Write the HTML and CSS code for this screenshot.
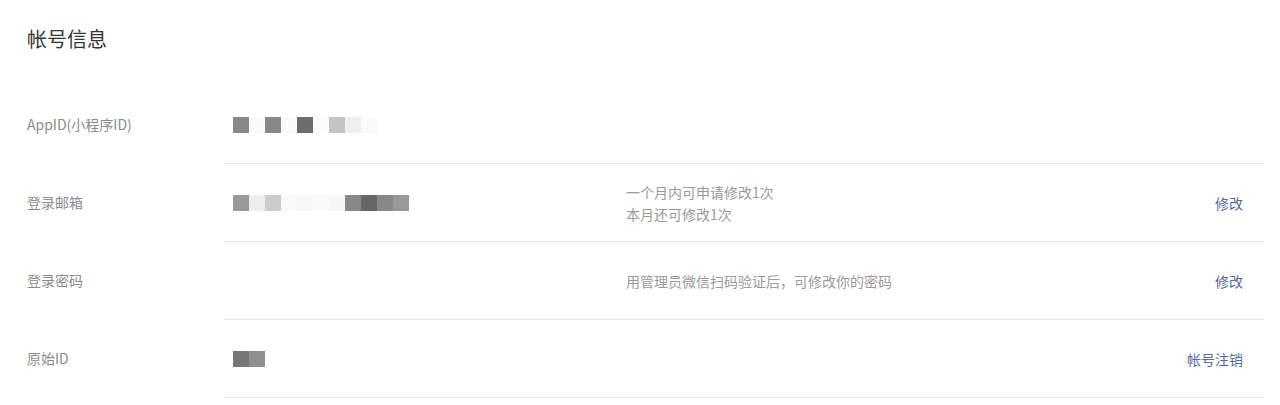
FILE: index.html
```html
<!DOCTYPE html>
<html lang="zh-CN">
<head>
  <meta charset="UTF-8">
  <title>帐号信息</title>
  <link rel="stylesheet" href="styles.css">
</head>
<body>

<!-- Account info panel -->
<div class="panel">
  <h2 class="panel-title">帐号信息</h2>

  <div class="info-row">
    <div class="info-label">AppID(小程序ID)</div>
    <div class="info-body">
      <div class="info-value">
        <span class="mosaic">
          <i class="s88"></i><i class="sfa"></i><i class="s88"></i><i class="sfb"></i><i class="s6d"></i><i class="sfc"></i><i class="sc4"></i><i class="sef"></i><i class="sfa"></i>
        </span>
      </div>
      <div class="info-desc"></div>
      <div class="info-action"></div>
    </div>
  </div>

  <div class="info-row">
    <div class="info-label">登录邮箱</div>
    <div class="info-body">
      <div class="info-value">
        <span class="mosaic">
          <i class="s99"></i><i class="see"></i><i class="scc"></i><i class="sfa"></i><i class="sf8"></i><i class="sfa"></i><i class="sf7"></i><i class="s88"></i><i class="s66"></i><i class="s88"></i><i class="s99"></i>
        </span>
      </div>
      <div class="info-desc">一个月内可申请修改1次<br>本月还可修改1次</div>
      <div class="info-action"><a href="#">修改</a></div>
    </div>
  </div>

  <div class="info-row">
    <div class="info-label">登录密码</div>
    <div class="info-body">
      <div class="info-value"></div>
      <div class="info-desc">用管理员微信扫码验证后，可修改你的密码</div>
      <div class="info-action"><a href="#">修改</a></div>
    </div>
  </div>

  <div class="info-row">
    <div class="info-label">原始ID</div>
    <div class="info-body">
      <div class="info-value">
        <span class="mosaic">
          <i class="s77"></i><i class="s8f"></i>
        </span>
      </div>
      <div class="info-desc"></div>
      <div class="info-action"><a href="#">帐号注销</a></div>
    </div>
  </div>
</div>

</body>
</html>
```

FILE: styles.css
```css
/* Colours */
:root {
  --title: #353535;
  --label: #8c8c8c;
  --muted: #9a9a9a;
  --link: #576b95;
  --line: #e7e7e7;
}
html, body {
  margin: 0;
  padding: 0;
  background: #fff;
  font-family: "Noto Sans CJK SC", "Liberation Sans", sans-serif;
  font-size: 14px;
  color: var(--title);
}

/* Panel */
.panel {
  padding: 0 16px 0 27px;
}
.panel-title {
  margin: 0;
  padding-top: 25px;
  height: 61px;
  font-size: 20px;
  line-height: 28px;
  font-weight: 400;
  color: var(--title);
}

/* Rows */
.info-row {
  display: flex;
  height: 78px;
}
.info-label {
  width: 197px;
  display: flex;
  align-items: center;
  color: var(--label);
  padding-bottom: 2px;
  box-sizing: border-box;
}
.info-body {
  flex: 1;
  display: flex;
  align-items: center;
  padding: 0 21px 0 9px;
  border-bottom: 1px solid var(--line);
}
.info-value {
  width: 393px;
  display: flex;
  align-items: center;
}
.info-desc {
  flex: 1;
  color: var(--muted);
  line-height: 22px;
}
.info-action a {
  color: var(--link);
  text-decoration: none;
}

/* Blurred value */
.mosaic {
  display: inline-flex;
}
.mosaic i {
  display: block;
  width: 16px;
  height: 16px;
}
.s66 { background: #666; }
.s6d { background: #6d6d6d; }
.s77 { background: #777; }
.s88 { background: #888; }
.s8f { background: #8f8f8f; }
.s99 { background: #999; }
.sc4 { background: #c4c4c4; }
.scc { background: #ccc; }
.see { background: #eee; }
.sef { background: #efefef; }
.sf7 { background: #f7f7f7; }
.sf8 { background: #f8f8f8; }
.sfa { background: #fafafa; }
.sfb { background: #fbfbfb; }
.sfc { background: #fcfcfc; }
```
